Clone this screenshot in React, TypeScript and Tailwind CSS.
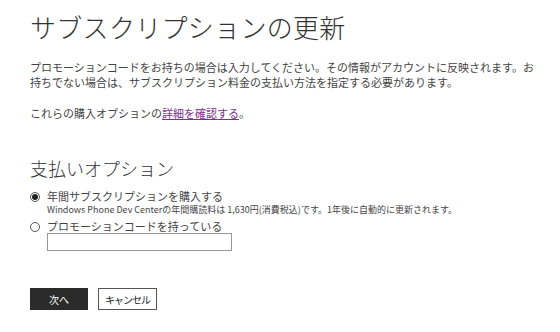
import { useState } from "react";

export default function App() {
  const [option, setOption] = useState<"annual" | "promo">("annual");

  const Radio = ({ checked }: { checked: boolean }) => (
    <span className="flex h-[10px] w-[10px] shrink-0 items-center justify-center rounded-full border border-[#555] bg-white">
      {checked && <span className="h-[6px] w-[6px] rounded-full bg-[#222]" />}
    </span>
  );

  return (
    <main
      className="h-[332px] w-[560px] bg-white pl-[30px] pt-[11px] text-[#444]"
      style={{ fontFamily: '"Noto Sans CJK JP", "Noto Sans", sans-serif' }}
    >
      <h1 className="text-[26px] font-light leading-[31px] tracking-[0.3px] text-[#333]">
        サブスクリプションの更新
      </h1>

      <p className="mt-[18px] w-[510px] text-[11px] leading-[15px]">
        プロモーションコードをお持ちの場合は入力してください。その情報がアカウントに反映されます。お持ちでない場合は、サブスクリプション料金の支払い方法を指定する必要があります。
      </p>

      <p className="mt-[16px] text-[11px] leading-[15px]">
        これらの購入オプションの
        <a href="#" className="text-[#7e2f8e] underline">
          詳細を確認する
        </a>
        。
      </p>

      <h2 className="mt-[35px] text-[18px] font-light leading-[24px] text-[#333]">
        支払いオプション
      </h2>

      <div className="mt-[9px] flex flex-col">
        <label
          className="flex cursor-pointer items-center gap-[7px] text-[11px] leading-[15px]"
          onClick={() => setOption("annual")}
        >
          <Radio checked={option === "annual"} />
          年間サブスクリプションを購入する
        </label>
        <p className="ml-[17px] text-[9px] leading-[12px]">
          Windows Phone Dev Centerの年間購読料は 1,630円(消費税込)です。1年後に自動的に更新されます。
        </p>

        <label
          className="mt-[3px] flex cursor-pointer items-center gap-[7px] text-[11px] leading-[15px]"
          onClick={() => setOption("promo")}
        >
          <Radio checked={option === "promo"} />
          プロモーションコードを持っている
        </label>
        <input
          type="text"
          className="-mt-[1px] ml-[17px] h-[18px] w-[185px] border border-[#999] bg-white px-1 text-[11px] outline-none"
        />
      </div>

      <div className="mt-[37px] flex gap-[10px]">
        <button className="flex h-[22px] w-[58px] items-center justify-center bg-[#2b2b2b] text-[10px] text-white">
          次へ
        </button>
        <button className="flex h-[22px] w-[59px] items-center justify-center border border-[#555] bg-white text-[10px] tracking-[-1px] text-[#222]">
          キャンセル
        </button>
      </div>
    </main>
  );
}
